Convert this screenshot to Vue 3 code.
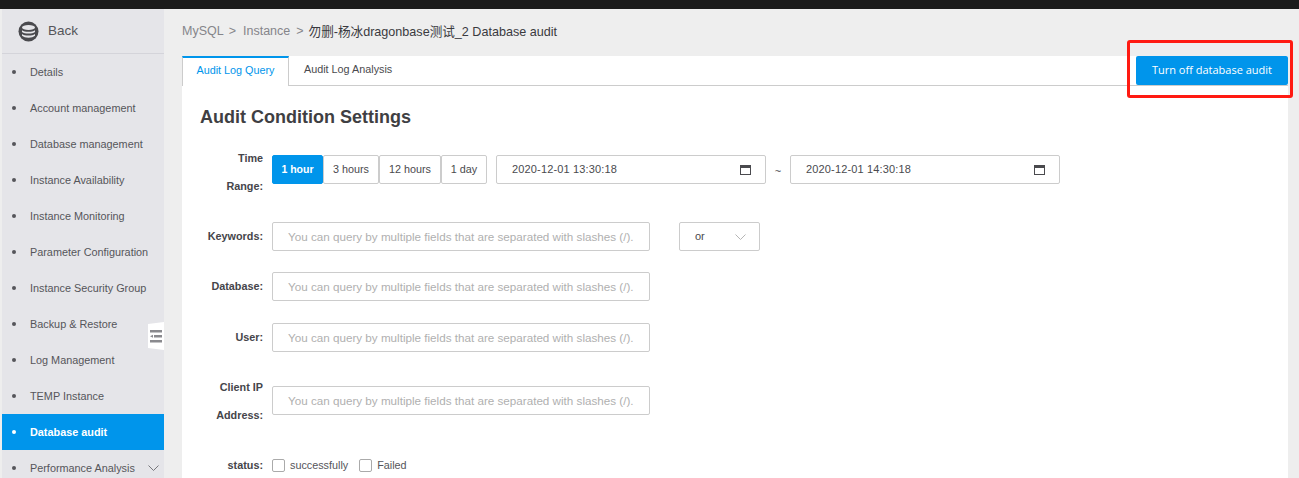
<script setup>
const menu = ['Details','Account management','Database management','Instance Availability','Instance Monitoring','Parameter Configuration','Instance Security Group','Backup & Restore','Log Management','TEMP Instance','Database audit','Performance Analysis']
const hint = 'You can query by multiple fields that are separated with slashes (/).'
const ranges = ['1 hour','3 hours','12 hours','1 day']
</script>

<template>
  <div class="page">
    <div class="topbar"></div>
    <div class="body">
      <aside class="side">
        <div class="back">
          <svg width="21" height="21" viewBox="0 0 21 21">
            <circle cx="10.5" cy="10.5" r="10" fill="#4a4a4e"/>
            <ellipse cx="10.5" cy="6.5" rx="6.500" ry="2.500" fill="#e5e5e9"/>
            <path d="M4 9.200c1.500 1 3.700 1.500 6.500 1.500s5-.5 6.500-1.500v1.800c-1.500 1-3.700 1.500-6.500 1.500s-5-.5-6.500-1.500z" fill="#e5e5e9"/>
            <path d="M4 13c1.500 1 3.700 1.500 6.500 1.500s5-.5 6.500-1.500v1.800c-1.500 1.300-3.700 2-6.500 2s-5-.7-6.500-2z" fill="#e5e5e9"/>
          </svg>
          <span>Back</span>
        </div>
        <ul class="menu">
          <li v-for="(m, i) in menu" :key="m" :class="{ active: m === 'Database audit' }">
            <i class="dot"></i>
            <span>{{ m }}</span>
            <svg v-if="i === 11" class="chev" width="11" height="6" viewBox="0 0 11 6"><path d="M.5.5l5 5 5-5" fill="none" stroke="#77777c"/></svg>
          </li>
        </ul>
        <div class="handle">
          <svg width="12" height="13" viewBox="0 0 12 13" fill="#8a8a8e">
            <rect x="0" y="0" width="12" height="2.500"/>
            <rect x="4" y="5" width="8" height="2.500"/>
            <path d="M0 6.200L3 4.800v3z"/>
            <rect x="0" y="10" width="12" height="2.500"/>
          </svg>
        </div>
      </aside>

      <main class="main">
        <div class="crumb">
          <span>MySQL</span><span class="sep">&gt;</span><span>Instance</span><span class="sep two">&gt;</span><b>勿删-杨冰dragonbase测试_2 Database audit</b>
        </div>
        <section class="panel">
          <div class="tabs">
            <div class="tab on">Audit Log Query</div>
            <div class="tab">Audit Log Analysis</div>
            <button class="off"><span>Turn off database audit</span></button>
          </div>
          <div class="form">
            <h2>Audit Condition Settings</h2>

            <div class="row r-time">
              <label>Time<br>Range:</label>
              <div class="btns">
                <span v-for="(r, i) in ranges" :key="r" :class="['rbtn', { sel: i === 0 }]">{{ r }}</span>
              </div>
              <div class="date first">2020-12-01 13:30:18
                <svg width="11" height="10" viewBox="0 0 11 10"><rect x=".5" y=".5" width="10" height="9" fill="none" stroke="#4a4a4e"/><rect width="11" height="3" fill="#4a4a4e"/></svg>
              </div>
              <span class="tilde">~</span>
              <div class="date">2020-12-01 14:30:18
                <svg width="11" height="10" viewBox="0 0 11 10"><rect x=".5" y=".5" width="10" height="9" fill="none" stroke="#4a4a4e"/><rect width="11" height="3" fill="#4a4a4e"/></svg>
              </div>
            </div>

            <div class="row r-key">
              <label>Keywords:</label>
              <div class="inp">{{ hint }}</div>
              <div class="sel-box">or
                <svg width="11" height="6" viewBox="0 0 11 6"><path d="M.5.5l5 5 5-5" fill="none" stroke="#b5b5b5"/></svg>
              </div>
            </div>
            <div class="row r-db">
              <label>Database:</label>
              <div class="inp">{{ hint }}</div>
            </div>
            <div class="row r-user">
              <label>User:</label>
              <div class="inp">{{ hint }}</div>
            </div>
            <div class="row r-ip">
              <label>Client IP<br>Address:</label>
              <div class="inp">{{ hint }}</div>
            </div>
            <div class="row r-status">
              <label>status:</label>
              <i class="cb"></i><span class="cbl">successfully</span>
              <i class="cb second"></i><span class="cbl">Failed</span>
            </div>
          </div>
        </section>
      </main>
    </div>
    <div class="mark"></div>
  </div>
</template>

<style>
html, body { margin: 0; overflow: hidden; background: #eee; }
</style>

<style scoped>
.page { position: relative; width: 1299px; height: 478px; overflow: hidden; background: #eee; font: 12px "Liberation Sans", "Noto Sans CJK SC", Arial, sans-serif; color: #4a4a4e; }
.topbar { height: 9px; background: #1b1b1b; }
.body { display: flex; height: 469px; }
.side { position: relative; flex: 0 0 162px; margin-left: 2px; background: #e5e5e9; }
.back { height: 44px; display: flex; align-items: center; padding-left: 16px; gap: 9px; border-bottom: 1px solid #d4d4da; font-size: 13.500px; color: #55555a; }
.back span { position: relative; top: -1px; }
.menu { list-style: none; margin: 0; padding: 0; }
.menu li { height: 36px; display: flex; align-items: center; padding-left: 10px; color: #55555a; position: relative; font-size: 10.850px; }
.dot { width: 4px; height: 4px; border-radius: 50%; background: #55555a; margin-right: 14px; }
.menu li.active { background: #0095eb; color: #fff; font-weight: bold; }
.menu li.active .dot { background: #fff; }
.chev { position: absolute; right: 5px; top: 15px; }
.handle { position: absolute; left: 146px; top: 313px; width: 16px; height: 28px; background: #fff; display: flex; align-items: center; justify-content: center; clip-path: polygon(0 2px, 100% 0, 100% 100%, 0 calc(100% - 2px)); }
.main { flex: 1; padding: 0 11px 0 18px; min-width: 0; }
.crumb { height: 47px; box-sizing: border-box; padding-bottom: 4px; display: flex; align-items: center; font-size: 12.500px; color: #85858a; white-space: pre; }
.sep { margin: 0 7px 0 5px; }
.sep.two { margin: 0 5px 0 6px; }
.crumb b { font-weight: normal; color: #3a3a3e; font-size: 12.600px; }
.panel { background: #fff; height: 500px; }
.tabs { display: flex; height: 29px; border-bottom: 1px solid #ccc; font-size: 10.800px; }
.tab { padding: 0 15px; line-height: 27px; color: #4a4a4e; }
.tab.on { width: 107px; box-sizing: border-box; padding: 0; text-align: center; color: #0095eb; border-top: 2px solid #0095eb; border-left: 1px solid #ccc; border-right: 1px solid #ccc; background: #fff; height: 30px; line-height: 24px; }
.off { margin-left: auto; width: 152px; height: 29px; border: 0; border-radius: 2px; background: #0095eb; color: #fff; font: 11px "Open Sans", "Liberation Sans", sans-serif; padding: 0 0 2px; }
.form { padding: 0 18px; }
h2 { margin: 0; padding-top: 21px; height: 28px; line-height: 21px; font-size: 18px; color: #3f3f43; font-weight: bold; }
.row { display: flex; align-items: flex-start; }
.row label { flex: 0 0 63px; margin-right: 9px; text-align: right; line-height: 28px; color: #45454a; font-weight: bold; font-size: 10.800px; }
.r-time { margin-top: 20px; }
.r-key { margin-top: 22px; }
.r-db { margin-top: 21px; }
.r-user { margin-top: 22px; }
.r-ip { margin-top: 34px; }
.r-status { margin-top: 22px; align-items: center; height: 28px; }
.r-time label { margin-top: -11px; }
.r-ip label { margin-top: -13px; }
.btns { display: flex; margin-right: 9px; }
.rbtn { height: 29px; box-sizing: border-box; border: 1px solid #ccc; border-radius: 2px; line-height: 27px; text-align: center; font-size: 10.800px; color: #4a4a4e; }
.rbtn:nth-child(1) { width: 51px; }
.rbtn:nth-child(2) { width: 56px; }
.rbtn:nth-child(3) { width: 62px; }
.rbtn:nth-child(4) { width: 46px; }
.rbtn.sel { background: #0095eb; border-color: #0095eb; color: #fff; font-weight: bold; font-size: 10.500px; }
.date { position: relative; width: 270px; height: 29px; box-sizing: border-box; border: 1px solid #ccc; border-radius: 2px; padding-left: 15px; line-height: 26px; font-size: 11px; color: #4a4a4e; letter-spacing: .15px; }
.date svg { position: absolute; right: 14px; top: 9px; }
.tilde { width: 24px; text-align: center; line-height: 32px; font-size: 11px; }
.inp { width: 378px; height: 29px; box-sizing: border-box; border: 1px solid #ccc; border-radius: 2px; padding-left: 15px; line-height: 27px; font-size: 11.670px; color: #b0b0b0; white-space: nowrap; }
.sel-box { position: relative; margin-left: 29px; width: 81px; height: 29px; box-sizing: border-box; border: 1px solid #ccc; border-radius: 2px; padding-left: 15px; line-height: 27px; font-size: 11px; }
.sel-box svg { position: absolute; right: 13px; top: 11px; }
.cb { width: 13px; height: 13px; border: 1px solid #aaa; border-radius: 2px; background: #fff; box-sizing: border-box; }
.cbl { margin-left: 5px; font-size: 10.800px; color: #55555a; }
.cb.second { margin-left: 11px; }
.mark { position: absolute; left: 1127px; top: 40px; width: 166px; height: 58px; box-sizing: border-box; border: 3px solid #ff1a12; border-radius: 3px; }
</style>
